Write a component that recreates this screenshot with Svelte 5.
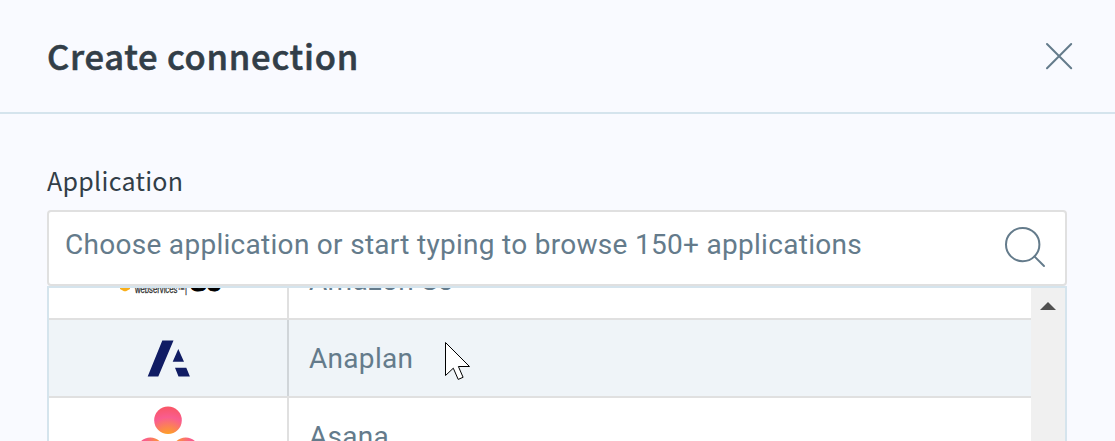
<script lang="ts">
	let query = '';
	let selected = 'anaplan';

	const applications = [
		{ id: 'amazon-s3', name: 'Amazon S3' },
		{ id: 'anaplan', name: 'Anaplan' },
		{ id: 'asana', name: 'Asana' }
	];
</script>

<main class="dialog">
	<header class="dialog-header">
		<h1>Create connection</h1>
		<button class="close" aria-label="Close">
			<svg width="28" height="28" viewBox="0 0 28 28">
				<path d="M2 2 26.2 26.2M26.2 2 2 26.2" />
			</svg>
		</button>
	</header>

	<section class="dialog-body">
		<label for="application">Application</label>
		<div class="search-field">
			<input
				id="application"
				type="text"
				bind:value={query}
				placeholder="Choose application or start typing to browse 150+ applications"
			/>
			<svg class="search-icon" width="42" height="42" viewBox="0 0 42 42">
				<circle cx="18.7" cy="18.6" r="16.7" />
				<path d="M30.4 30.4 40 40" />
			</svg>
		</div>

		<div class="dropdown">
			<ul class="options">
				{#each applications as app}
					<li class="option" class:active={app.id === selected}>
						<div class="logo">
							{#if app.id === 'amazon-s3'}
								<svg width="110" height="44" viewBox="0 0 110 44">
									<path class="amazon-box" d="M7 20H17V31L13 33.2H11L7 31Z" />
									<text class="amazon-text" x="22" y="34.5" textLength="52" lengthAdjust="spacingAndGlyphs">webservices™|</text>
									<text class="amazon-s3" x="77" y="32.8" textLength="31" lengthAdjust="spacingAndGlyphs">S3</text>
								</svg>
							{:else if app.id === 'anaplan'}
								<svg width="44" height="38" viewBox="0 0 44 38">
									<path class="anaplan-mark" d="M16.3 1.5H27.5L12.3 37.5H1.7ZM32.3 10 38 22.8H26.7ZM29 28.8H40.3L43.9 37.5H32.5Z" />
								</svg>
							{:else}
								<svg width="60" height="60" viewBox="0 0 60 60">
									<defs>
										<radialGradient id="asana-fill" gradientUnits="userSpaceOnUse" cx="30" cy="34" r="38">
											<stop offset="0" stop-color="#ffb900" />
											<stop offset="0.6" stop-color="#f95d8f" />
											<stop offset="1" stop-color="#f95353" />
										</radialGradient>
									</defs>
									<g fill="url(#asana-fill)">
										<circle cx="30" cy="14.2" r="13.8" />
										<circle cx="12.3" cy="45.3" r="13.8" />
										<circle cx="47.7" cy="45.3" r="13.8" />
									</g>
								</svg>
							{/if}
						</div>
						<span class="name">{app.name}</span>
					</li>
				{/each}
			</ul>
			<div class="scrollbar">
				<svg width="16" height="8" viewBox="0 0 16 8">
					<path d="M8 0 16 8H0Z" />
				</svg>
			</div>
		</div>
	</section>

	<svg class="cursor" width="27" height="40" viewBox="0 0 27 40">
		<path d="M.5.5V33.5L8.3 26.2 13.2 37.4 18.1 35.3 13.4 24.5H24.5Z" />
	</svg>
</main>

<style>
	:global(body) {
		background: #f9faff;
	}

	.dialog {
		position: relative;
		height: 441px;
		overflow: hidden;
		background: #f9faff;
		font-family: Roboto, sans-serif;
		color: #647b8b;
	}

	.dialog-header {
		display: flex;
		align-items: center;
		justify-content: space-between;
		box-sizing: border-box;
		height: 114px;
		padding: 0 42px 0 47px;
		border-bottom: 2px solid #d5e4ed;
	}

	h1 {
		margin: 0;
		padding-bottom: 3px;
		font-family: 'Noto Sans CJK SC', sans-serif;
		font-size: 34.5px;
		font-weight: 500;
		line-height: 50px;
		letter-spacing: 0.75px;
		color: #323e48;
		-webkit-text-stroke: 0.6px #323e48;
	}

	.close {
		display: flex;
		padding: 0;
		border: 0;
		background: none;
	}

	.close path,
	.search-icon {
		fill: none;
		stroke: #647b8b;
		stroke-width: 2;
		stroke-linecap: round;
	}

	.dialog-body {
		padding: 46px 48px 0 47px;
	}

	label {
		display: block;
		height: 50px;
		font-family: 'Noto Sans CJK SC', sans-serif;
		font-size: 25px;
		line-height: 41px;
		letter-spacing: 0.3px;
		color: #323e48;
	}

	.search-field {
		display: flex;
		align-items: center;
		box-sizing: border-box;
		height: 76px;
		padding: 0 19px 2px 16px;
		border: 2px solid #e0e0e0;
		border-radius: 4px;
		background: #fff;
	}

	input {
		flex: 1;
		min-width: 0;
		height: 66px;
		padding: 0 0 6px;
		box-sizing: border-box;
		border: 0;
		outline: none;
		background: none;
		font-family: Roboto, sans-serif;
		font-size: 28px;
		letter-spacing: 0.29px;
		color: #647b8b;
	}

	input::placeholder {
		color: #647b8b;
		opacity: 1;
	}

	.dropdown {
		display: flex;
		box-sizing: border-box;
		height: 200px;
		border: 2px solid #d5e4ed;
		background: #fff;
		overflow: hidden;
	}

	/* list is scrolled part way through its first row */
	.options {
		flex: 1;
		margin: -46px 0 0;
		padding: 0;
		list-style: none;
	}

	.option {
		display: flex;
		box-sizing: border-box;
		height: 78px;
		border-bottom: 2px solid #e0e0e0;
	}

	.option.active {
		background: #eff4f8;
	}

	.logo {
		display: flex;
		align-items: center;
		justify-content: center;
		box-sizing: border-box;
		width: 240px;
		border-right: 2px solid #e0e0e0;
	}

	.active .logo {
		border-color: #d0d5d9;
	}

	.name {
		padding-left: 20px;
		font-size: 28px;
		line-height: 77px;
		letter-spacing: 0.3px;
	}

	.amazon-box {
		fill: #f9ae19;
	}

	.amazon-text {
		font: 10px 'Liberation Sans', sans-serif;
		fill: #333;
		stroke: #333;
		stroke-width: 0.3;
	}

	.amazon-s3 {
		font: bold 26px 'Liberation Sans', sans-serif;
		fill: #000;
		stroke: #000;
		stroke-width: 1;
	}

	.anaplan-mark {
		fill: #101c64;
	}

	.scrollbar {
		display: flex;
		justify-content: center;
		width: 34px;
		padding-top: 14px;
		box-sizing: border-box;
		background: #f0f0f0;
	}

	.scrollbar path {
		fill: #505050;
	}

	.cursor {
		position: absolute;
		left: 445px;
		top: 342px;
	}

	.cursor path {
		fill: #fff;
		stroke: #000;
		stroke-width: 1;
	}
</style>
